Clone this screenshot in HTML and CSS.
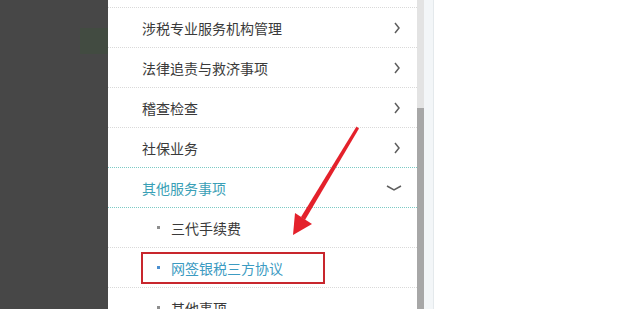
FILE: index.html
```html
<!DOCTYPE html>
<html lang="zh">
<head>
    <meta charset="UTF-8">
    <meta name="viewport" content="width=device-width, initial-scale=1.0">
    <title>其他服务事项</title>
    <link rel="stylesheet" href="styles.css">
</head>
<body>
    <div class="page">
        <div class="side">
            <div class="side-block"></div>
        </div>

        <div class="menu">
            <div class="menu-top"></div>
            <div class="item">
                <span class="label">涉税专业服务机构管理</span>
                <svg class="arrow-right" width="6" height="12" viewBox="0 0 6 12"><polyline points="1,1 5,6 1,11" /></svg>
            </div>
            <div class="item">
                <span class="label">法律追责与救济事项</span>
                <svg class="arrow-right" width="6" height="12" viewBox="0 0 6 12"><polyline points="1,1 5,6 1,11" /></svg>
            </div>
            <div class="item">
                <span class="label">稽查检查</span>
                <svg class="arrow-right" width="6" height="12" viewBox="0 0 6 12"><polyline points="1,1 5,6 1,11" /></svg>
            </div>
            <div class="item item-before-open">
                <span class="label">社保业务</span>
                <svg class="arrow-right" width="6" height="12" viewBox="0 0 6 12"><polyline points="1,1 5,6 1,11" /></svg>
            </div>
            <div class="item open">
                <span class="label">其他服务事项</span>
                <svg class="arrow-down" width="16" height="6" viewBox="0 0 16 6"><polyline points="1,1 8,5 15,1" /></svg>
            </div>
            <div class="sub">
                <span class="dot"></span>三代手续费
            </div>
            <div class="sub sub-marked">
                <span class="mark"><span class="dot"></span>网签银税三方协议</span>
            </div>
            <div class="sub">
                <span class="dot"></span>其他事项
            </div>
        </div>

        <div class="scrollbar">
            <div class="track"></div>
            <div class="thumb"></div>
        </div>
        <div class="gutter"></div>
        <div class="content"></div>

        <!-- annotation arrow -->
        <svg class="pointer" width="620" height="309" viewBox="0 0 620 309">
            <path d="M356.5 126.5 L359 128.5 L305 220 L301 217 Z" fill="#e4212b" />
            <path d="M293 235 L295 213 L312 224 Z" fill="#e4212b" />
        </svg>
    </div>
</body>
</html>
```

FILE: styles.css
```css
* {
    margin: 0;
    padding: 0;
    box-sizing: border-box;
}

body {
    font-family: "Microsoft YaHei", "Noto Sans CJK SC", "Noto Sans", sans-serif;
    background: #ffffff;
    overflow: hidden;
}

.page {
    position: relative;
    display: flex;
    width: 620px;
    height: 309px;
    overflow: hidden;
}

.side {
    width: 108px;
    flex-shrink: 0;
    background: #474747;
}

.side-block {
    width: 28px;
    height: 26px;
    margin: 28px 0 0 80px;
    background: #424b41;
}

.menu {
    width: 309px;
    flex-shrink: 0;
    background: #ffffff;
}

.menu-top {
    height: 8px;
    border-bottom: 1px dotted #d9d9d9;
}

.item, .sub {
    height: 40px;
    display: flex;
    align-items: center;
    border-bottom: 1px dotted #d9d9d9;
    font-size: 14px;
    color: #3a3a3a;
}

.item {
    justify-content: space-between;
    padding: 0 17px 0 34px;
}

.item.item-before-open {
    border-bottom: 1px dotted #7ccac5;
}

.item.open {
    color: #3a9fb6;
    border-bottom: 1px dotted #7ccac5;
    padding-right: 15px;
}

.arrow-right polyline, .arrow-down polyline {
    fill: none;
    stroke: #5e5e5e;
    stroke-width: 1.5;
}

.sub {
    padding-left: 49px;
}

.dot {
    width: 3px;
    height: 3px;
    background: #8e8e8e;
    margin-right: 11px;
}

.sub-marked {
    padding-left: 33px;
    color: #3c9bc2;
}

.mark {
    display: flex;
    align-items: center;
    width: 184px;
    height: 32px;
    padding-left: 14px;
    border: 2px solid #c8262d;
}

.mark .dot {
    background: #4a8fd0;
}

.scrollbar {
    width: 7px;
    flex-shrink: 0;
    display: flex;
    flex-direction: column;
}

.track {
    height: 108px;
    background: #e3e3e3;
}

.thumb {
    flex: 1;
    background: #a7a7a7;
}

.gutter {
    width: 10px;
    flex-shrink: 0;
    background: #f3f6f8;
    border-right: 1px solid #e4e9ec;
}

.content {
    flex: 1;
    background: #ffffff;
}

.pointer {
    position: absolute;
    top: 0;
    left: 0;
}
```
